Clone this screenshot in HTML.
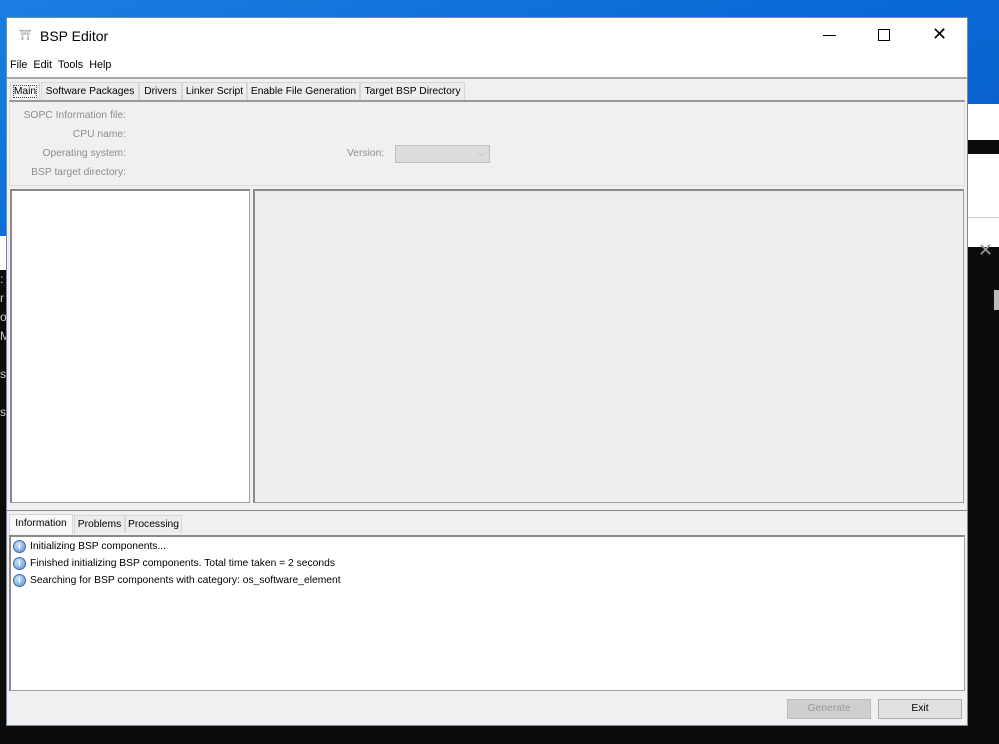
<!DOCTYPE html>
<html><head><style>
*{box-sizing:border-box;margin:0;padding:0}
body{width:999px;height:744px;overflow:hidden;position:relative;background:#0c0c0c;font-family:"Liberation Sans",sans-serif;font-size:10.3px;color:#000}
.a{position:absolute}
.lbl{position:absolute;color:#8c8c8c;text-align:right;width:120px;left:6px}
.tab{position:absolute;top:82px;height:18px;border:1px solid #d6d6d6;border-bottom:none;background:#ececec;padding-top:3px;text-align:center;white-space:nowrap;overflow:visible}
.btab{position:absolute;top:515px;height:18px;border:1px solid #d6d6d6;border-bottom:none;background:#ececec;padding-top:3px;text-align:center;white-space:nowrap}
.sunk{border-top:2px solid #8a8a8a;border-left:2px solid #8a8a8a;border-right:1px solid #a0a0a0;border-bottom:1px solid #a0a0a0}
.ic{position:absolute;width:13px;height:13px;border-radius:50%;background:radial-gradient(circle at 40% 35%,#cfe3f7,#5b8fcc);border:1px solid #3b6aa8;color:#fff;font-size:8px;font-weight:bold;text-align:center;line-height:11px}
.ln{position:absolute}
</style></head><body>
<div class="a" style="left:0;top:0;width:999px;height:236px;background:linear-gradient(160deg,#1a7fe0 0%,#0a6ad6 50%,#0a5cc8 100%)"></div>
<div class="a" style="left:0;top:236px;width:20px;height:34px;background:#fff"></div>
<div class="a" style="left:0;top:270px;width:8px;height:474px;background:#0c0c0c;color:#ccc;font-size:12px;line-height:19px">:<br>r<br>o<br>M<br><br>s<br><br>s</div>
<div class="a" style="left:968px;top:104px;width:31px;height:36px;background:#fff"></div>
<div class="a" style="left:968px;top:140px;width:31px;height:14px;background:#0c0c0c"></div>
<div class="a" style="left:968px;top:154px;width:31px;height:93px;background:#fff"></div>
<div class="a" style="left:968px;top:217px;width:31px;height:1px;background:#ccc"></div>
<div class="a" style="left:978px;top:240px;color:#999;font-size:18px">✕</div>
<div class="a" style="left:994px;top:290px;width:5px;height:20px;background:#bbb"></div>

<div class="a" style="left:6px;top:17px;width:962px;height:709px;background:#f0f0f0;border:1px solid #7a8a9a">
  <div class="a" style="left:0;top:0;width:960px;height:60px;background:#fff"></div>
  <div class="a" style="left:12px;top:12px;color:#888;font-size:10px">⛩</div>
  <div class="a" style="left:33px;top:10px;font-size:14px">BSP Editor</div>
  <div class="a" style="left:816px;top:17px;width:13px;height:1px;background:#000"></div>
  <div class="a" style="left:871px;top:11px;width:12px;height:12px;border:1px solid #000"></div>
  <div class="a" style="left:925px;top:6px;font-size:18px;font-weight:100">✕</div>
  <div class="a" style="left:3px;top:41px;font-size:10.8px">File&nbsp;&nbsp;Edit&nbsp;&nbsp;Tools&nbsp;&nbsp;Help</div>
  <div class="a" style="left:0;top:59px;width:960px;height:2px;background:#a9a9a9"></div>
</div>
<div class="tab" style="left:10px;width:30px;background:#f8f8f8"><span style="outline:1px dotted #444">Main</span></div>
<div class="tab" style="left:41px;width:98px">Software Packages</div>
<div class="tab" style="left:139px;width:43px">Drivers</div>
<div class="tab" style="left:182px;width:65px">Linker Script</div>
<div class="tab" style="left:247px;width:113px">Enable File Generation</div>
<div class="tab" style="left:360px;width:105px">Target BSP Directory</div>
<div class="a" style="left:9px;top:100px;width:956px;height:86px;border:1px solid #dcdcdc;border-top:2px solid #999"></div>
<div class="lbl" style="top:110px">SOPC Information file:</div>
<div class="lbl" style="top:129px">CPU name:</div>
<div class="lbl" style="top:148px">Operating system:</div>
<div class="lbl" style="top:167px">BSP target directory:</div>
<div class="a" style="left:347px;top:148px;color:#8c8c8c">Version:</div>
<div class="a" style="left:395px;top:145px;width:95px;height:18px;background:#dcdcdc;border:1px solid #c0c0c0;color:#aaa;font-size:9px;text-align:right;padding-right:4px;line-height:15px">⌵</div>
<div class="a sunk" style="left:10px;top:189px;width:240px;height:314px;background:#fff"></div>
<div class="a sunk" style="left:253px;top:189px;width:711px;height:314px;background:#efefef"></div>
<div class="a" style="left:7px;top:510px;width:960px;height:1px;background:#888"></div>
<div class="btab" style="left:9px;width:64px;background:#f8f8f8;top:514px;height:20px">Information</div>
<div class="btab" style="left:74px;width:51px">Problems</div>
<div class="btab" style="left:125px;width:57px">Processing</div>
<div class="a sunk" style="left:9px;top:535px;width:956px;height:156px;background:#fff">
  <div class="ic" style="top:3px;left:2px">i</div><div class="ln" style="top:4px;left:19px">Initializing BSP components...</div>
  <div class="ic" style="top:20px;left:2px">i</div><div class="ln" style="top:21px;left:19px">Finished initializing BSP components. Total time taken = 2 seconds</div>
  <div class="ic" style="top:37px;left:2px">i</div><div class="ln" style="top:38px;left:19px">Searching for BSP components with category: os_software_element</div>
</div>
<div class="a" style="left:787px;top:699px;width:84px;height:20px;background:#cfcfcf;border:1px solid #bdbdbd;color:#999;text-align:center;line-height:18px">Generate</div>
<div class="a" style="left:878px;top:699px;width:84px;height:20px;background:#e1e1e1;border:1px solid #adadad;text-align:center;line-height:18px">Exit</div>
</body></html>
